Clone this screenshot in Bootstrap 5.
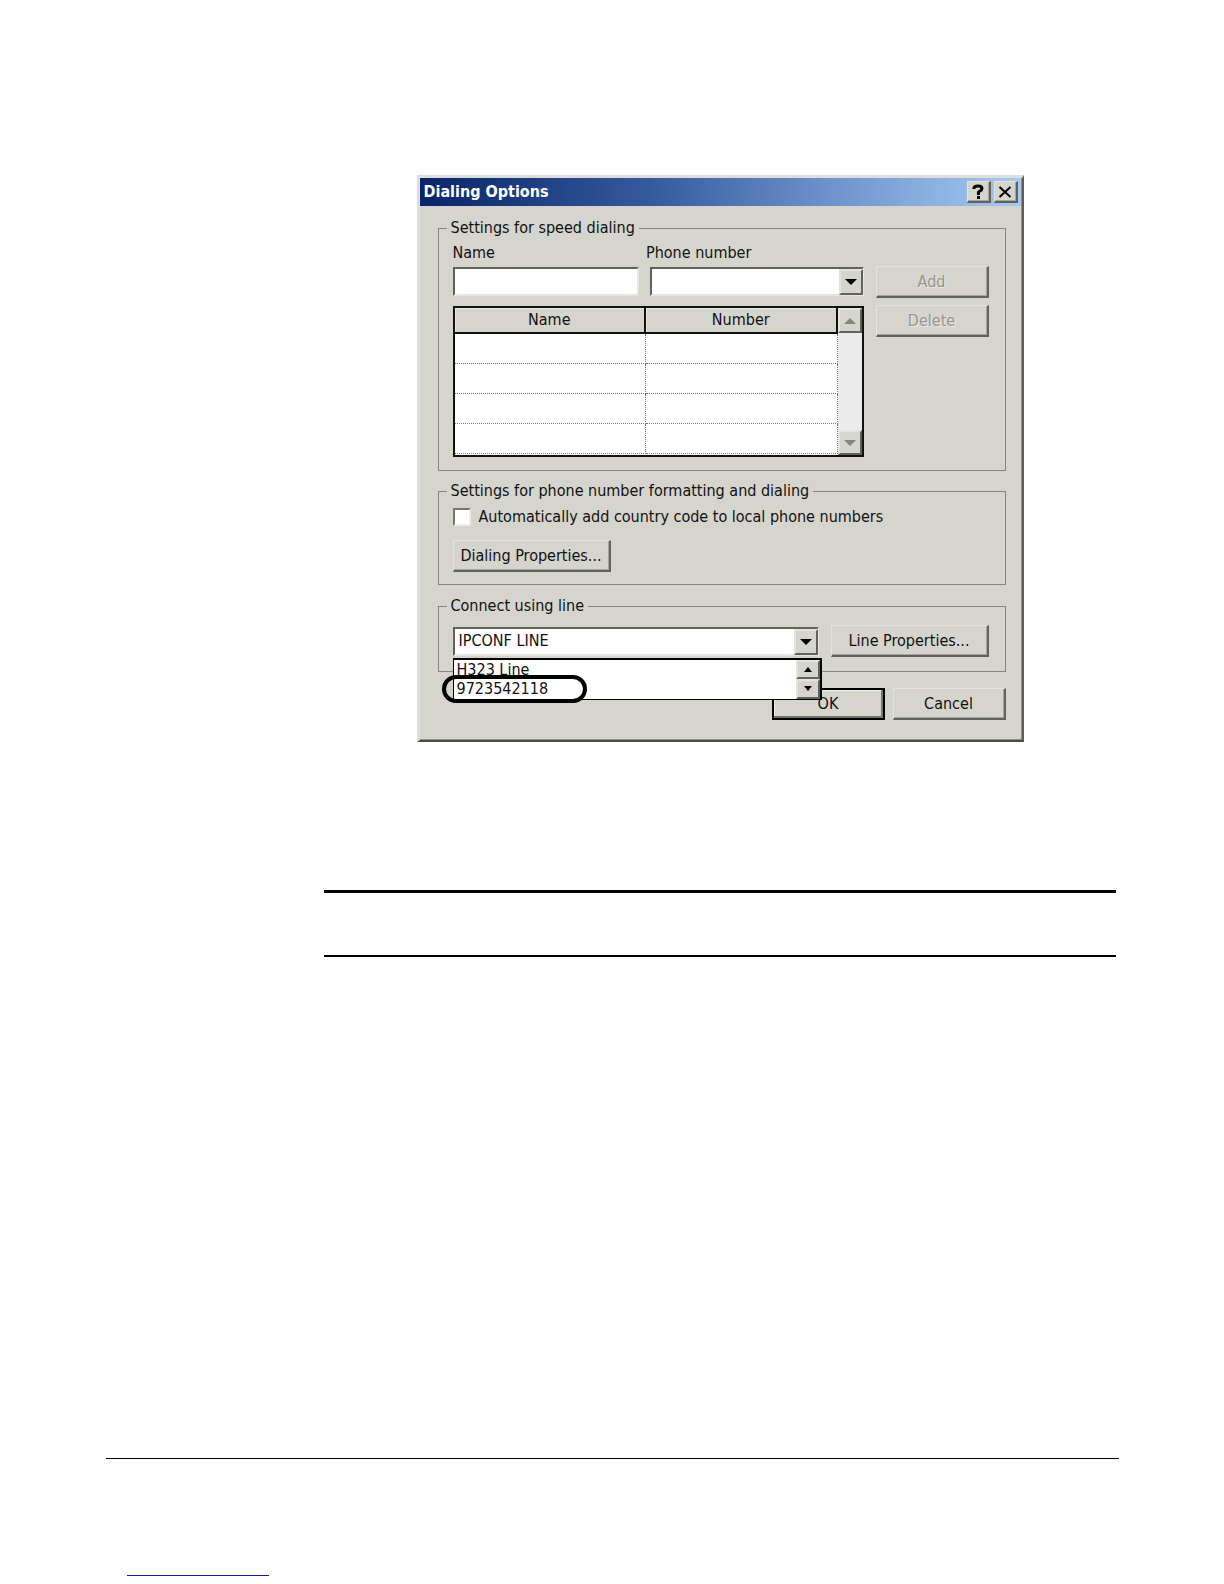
<!DOCTYPE html>
<html lang="en">
<head>
<meta charset="utf-8">
<meta name="viewport" content="width=device-width, initial-scale=1">
<title>Dialing Options</title>
<link href="https://cdn.jsdelivr.net/npm/bootstrap@5.3.0/dist/css/bootstrap.min.css" rel="stylesheet">
<style>
  body { background: #fefefe; color: #111; font-family: "DejaVu Sans Condensed", "DejaVu Sans", sans-serif; font-size: 16px; line-height: 20px; }
  .page { min-height: 1584px; padding: 175px 105px 0 106px; }
  .page-main { padding-left: 218px; padding-right: 3px; flex: 1 0 auto; }
  .rule { height: 0; margin: 0; border: 0; opacity: 1; color: #000; }
  .rule-thick { border-top: 3px solid #000; margin-top: 148px; }
  .rule-medium { border-top: 2px solid #000; margin-top: 62px; }
  .rule-thin { border-top: 1px solid #000; }
  .rule-link { border-top: 1px solid #1616a0; width: 142px; margin: 116px 0 8px 21px; }

  .dialog { max-width: 607px; background: #d6d5cd; border: 3px solid; border-color: #dededa #5c5c5a #4c4c4a #dededa; border-right-width: 2px; border-bottom-width: 2px; box-shadow: inset -1px -1px #8c8c88; }
  .title-bar { height: 28px; padding: 0 3px 0 4px; margin-right: 1px; gap: 3px; background: linear-gradient(90deg, #0a246a, #355a9c 38%, #6d92cc 68%, #a6caf0); color: #fff; }
  .title-bar h1 { font-size: 16px; line-height: 20px; font-weight: 700; }
  .dialog-body { padding: 12px 16px 20px 18px; }

  .btn3d, .arrow-btn { background: #d6d5cd; color: #111; border: 2px solid; border-color: #e4e3dd #62625c #62625c #e4e3dd; border-radius: 0; padding: 0; }
  .btn3d { width: 113px; height: 32px; border-width: 1px 2px 2px 1px; box-shadow: inset -1px -1px #a5a49d; }
  .btn3d:disabled { color: #96958e; text-shadow: 1px 1px #e9e8e2; }
  .btn-wide { width: 158px; }
  .btn-default { border: 2px solid #000; box-shadow: inset -2px -2px #74746e, inset 1px 1px #f0efea; }
  .title-btn { width: 24px; height: 22px; }
  .arrow-btn { display: flex; align-items: center; justify-content: center; }

  .group { border: 1px solid #85857f; padding: 0 16px 0 14px; margin-bottom: 10px; }
  .group legend { float: none; width: auto; margin: 0 0 0 -6px; padding: 0 4px; font-size: 16px; line-height: 20px; }
  .group-speed { padding-top: 5px; padding-bottom: 13px; }
  .group-format { padding-top: 6px; padding-bottom: 12px; margin-bottom: 11px; }
  .group-format .btn3d { margin-top: 13px; }
  .group-line { padding-top: 9px; padding-bottom: 14px; margin-bottom: 16px; }
  .side-buttons { gap: 7px; padding-top: 23px; }

  .sunken { width: 100%; height: 29px; background: #fff; border: 2px solid; border-color: #62625c #e6e5df #e6e5df #62625c; border-radius: 0; padding: 0 4px; color: #111; appearance: none; display: block; }
  .combo .arrow-btn { position: absolute; top: 2px; right: 1px; bottom: 1px; width: 24px; }
  .name-field { flex: 186 1 0; padding-right: 7px; }
  .phone-field { flex: 217 1 0; }

  .grid-box { border: 2px solid #111; margin-top: 10px; height: 151px; background: #fff; }
  .entries { border-collapse: separate; border-spacing: 0; table-layout: fixed; }
  .entries th { height: 26px; padding: 0; line-height: 20px; font-weight: 400; text-align: center; background: #d6d5cd; border-right: 2px solid #111; border-bottom: 2px solid #111; box-shadow: inset 1px 1px #e8e7e1; }
  .entries td { height: 30px; padding: 0; border-right: 1px dotted #777; border-bottom: 1px dotted #777; }
  .scroll-track { width: 24px; background: #ebebeb; flex: none; }
  .scroll-track .arrow-btn { width: 24px; height: 25px; }

  .tick { appearance: none; width: 18px; height: 18px; margin: 0; background: #fff; border: 2px solid; border-color: #77776f #eeede8 #eeede8 #77776f; flex: none; }
  .drop-list { position: absolute; z-index: 2; top: 31px; left: 0; right: -3px; height: 42px; background: #fff; border: 1px solid #000; border-right-width: 2px; border-top-width: 2px; }
  .drop-list .choice { display: block; width: 100%; border: 0; background: none; padding: 0 3px; text-align: left; line-height: 20px; height: 19px; color: #111; }
  .drop-list .arrow-btn { position: static; width: 24px; height: 50%; }
  .ring { position: absolute; z-index: 3; left: -11px; top: 48px; width: 145px; height: 28px; border: 4px solid #000; border-radius: 14px; pointer-events: none; }
</style>
<script src="https://cdn.jsdelivr.net/npm/bootstrap@5.3.0/dist/js/bootstrap.bundle.min.js"></script>
</head>
<body>
<div class="page d-flex flex-column">
  <main class="page-main">
    <section class="dialog mx-auto">
      <header class="title-bar d-flex align-items-center">
        <h1 class="m-0 me-auto">Dialing Options</h1>
        <button type="button" class="btn3d title-btn d-flex align-items-center justify-content-center">
          <svg width="14" height="16" viewBox="0 0 14 16" fill="none" stroke="#000" stroke-width="3"><path d="M3 5V4q0-2 4-2t4 2.500q0 1.500-2 2.500T7.500 9.500V11M6 13.500h3"/></svg>
        </button>
        <button type="button" class="btn3d title-btn d-flex align-items-center justify-content-center">
          <svg width="14" height="14" viewBox="0 0 14 14" stroke="#000" stroke-width="2"><path d="M1.500 2l11 10M12.500 2l-11 10"/></svg>
        </button>
      </header>
      <form class="dialog-body">
        <fieldset class="group group-speed">
          <legend>Settings for speed dialing</legend>
          <div class="d-flex gap-2">
            <div class="flex-grow-1 me-1">
              <div class="d-flex">
                <div class="name-field">
                  <label for="entry-name" class="d-block mb-1">Name</label>
                  <input id="entry-name" type="text" class="sunken">
                </div>
                <div class="phone-field">
                  <label for="entry-phone" class="d-block mb-1">Phone number</label>
                  <div class="combo position-relative ms-1">
                    <select id="entry-phone" class="sunken"><option></option></select>
                    <span class="arrow-btn"><svg width="12" height="6" viewBox="0 0 12 6"><path d="M0 0h12L6 6z"/></svg></span>
                  </div>
                </div>
              </div>
              <div class="grid-box d-flex">
                <div class="flex-grow-1">
                  <table class="entries w-100">
                    <thead><tr><th scope="col">Name</th><th scope="col">Number</th></tr></thead>
                    <tbody>
                      <tr><td></td><td></td></tr>
                      <tr><td></td><td></td></tr>
                      <tr><td></td><td></td></tr>
                      <tr><td></td><td></td></tr>
                    </tbody>
                  </table>
                </div>
                <div class="scroll-track d-flex flex-column justify-content-between">
                  <button type="button" class="arrow-btn"><svg width="12" height="6" viewBox="0 0 12 6" fill="#85857f"><path d="M0 6h12L6 0z"/></svg></button>
                  <button type="button" class="arrow-btn"><svg width="12" height="6" viewBox="0 0 12 6" fill="#85857f"><path d="M0 0h12L6 6z"/></svg></button>
                </div>
              </div>
            </div>
            <div class="side-buttons d-flex flex-column">
              <button type="button" class="btn3d" disabled>Add</button>
              <button type="button" class="btn3d" disabled>Delete</button>
            </div>
          </div>
        </fieldset>

        <fieldset class="group group-format">
          <legend>Settings for phone number formatting and dialing</legend>
          <div class="d-flex align-items-center gap-2">
            <input id="country" type="checkbox" class="tick">
            <label for="country">Automatically add country code to local phone numbers</label>
          </div>
          <button type="button" class="btn3d btn-wide d-block">Dialing Properties...</button>
        </fieldset>

        <fieldset class="group group-line">
          <legend><label for="line">Connect using line</label></legend>
          <div class="d-flex gap-2 align-items-center">
            <div class="combo position-relative flex-grow-1 me-1">
              <select id="line" class="sunken"><option>IPCONF LINE</option></select>
              <span class="arrow-btn"><svg width="12" height="6" viewBox="0 0 12 6"><path d="M0 0h12L6 6z"/></svg></span>
              <div class="drop-list d-flex">
                <div class="flex-grow-1">
                  <button type="button" class="choice">H323 Line</button>
                  <button type="button" class="choice">9723542118</button>
                </div>
                <div class="d-flex flex-column">
                  <button type="button" class="arrow-btn"><svg width="8" height="5" viewBox="0 0 8 5"><path d="M0 5h8L4 0z"/></svg></button>
                  <button type="button" class="arrow-btn"><svg width="8" height="5" viewBox="0 0 8 5"><path d="M0 0h8L4 5z"/></svg></button>
                </div>
              </div>
              <div class="ring"></div>
            </div>
            <button type="button" class="btn3d btn-wide">Line Properties...</button>
          </div>
        </fieldset>

        <div class="d-flex justify-content-end gap-2">
          <button type="submit" class="btn3d btn-default">OK</button>
          <button type="button" class="btn3d">Cancel</button>
        </div>
      </form>
    </section>
    <hr class="rule rule-thick">
    <hr class="rule rule-medium">
  </main>
  <footer>
    <hr class="rule rule-thin">
    <hr class="rule rule-link">
  </footer>
</div>
</body>
</html>
